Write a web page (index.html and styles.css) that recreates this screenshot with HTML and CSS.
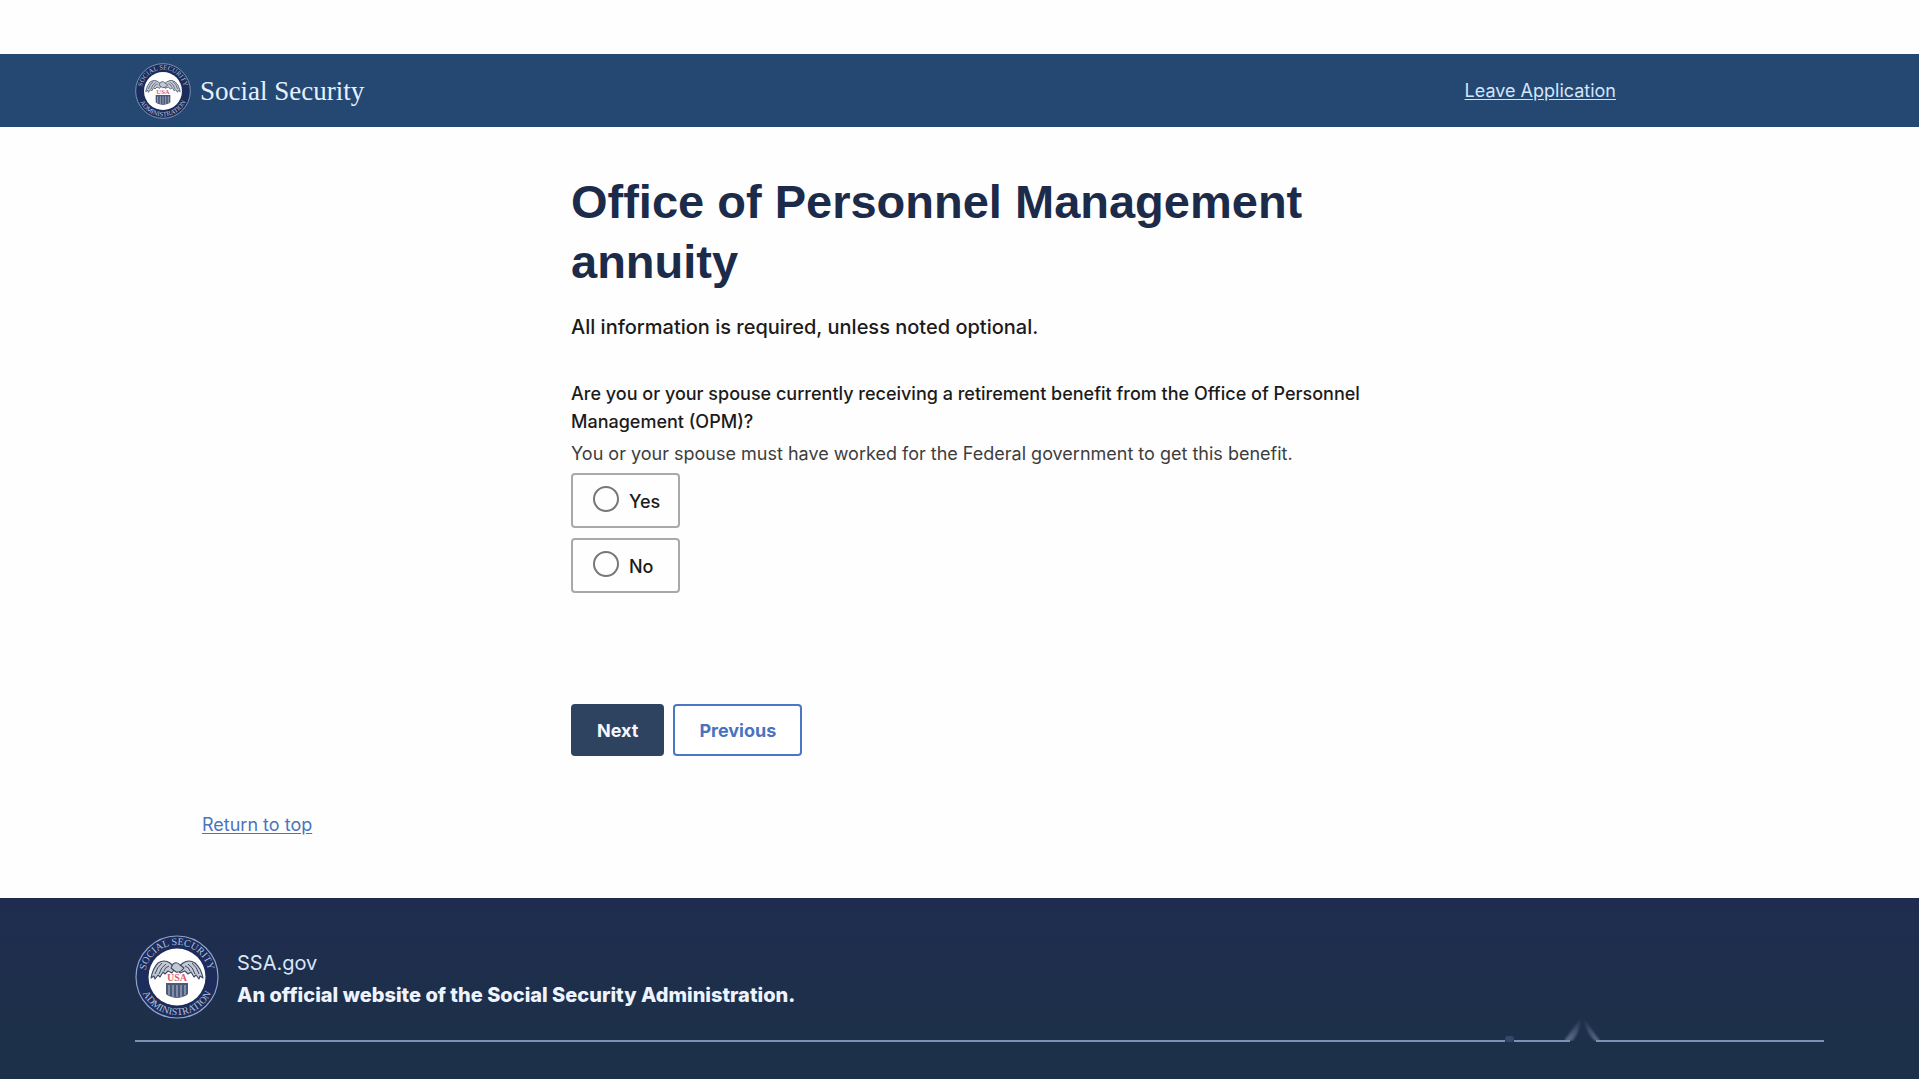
FILE: index.html
```html
<!DOCTYPE html>
<html lang="en">
<head>
  <meta charset="UTF-8">
  <meta name="viewport" content="width=device-width, initial-scale=1">
  <title>Office of Personnel Management annuity</title>
  <link rel="stylesheet" href="styles.css">
</head>
<body>

<!-- Seal, shared by the header and the footer -->
<svg class="defs" width="0" height="0" aria-hidden="true">
  <defs>
    <path id="arc-top" d="M 10 42 A 32 32 0 0 1 74 42" />
    <path id="arc-bottom" d="M 4 42 A 38 38 0 0 0 80 42" />
    <symbol id="seal" viewBox="0 0 84 84">
      <circle cx="42" cy="42" r="41" fill="#1c2c5b" stroke="#8fa3cc" stroke-width="1.200" />
      <circle cx="42" cy="42" r="28.500" fill="#fff" />
      <text class="seal-text"><textPath href="#arc-top" startOffset="50%" text-anchor="middle">SOCIAL SECURITY</textPath></text>
      <text class="seal-text"><textPath href="#arc-bottom" startOffset="50%" text-anchor="middle">ADMINISTRATION</textPath></text>
      <g fill="#c3c9d4" stroke="#3d4960" stroke-width="1.100" stroke-linejoin="round">
        <path d="M40 33 L35 28 Q29 24 23 28 Q18 33 16 43 L19 41 L20 44 L23 40 L25 42 L28 37 L30 39 L33 36 L37 38 Z" />
        <path d="M42 33 L48 28 Q54 24 60 28 Q66 33 68 43 L65 41 L64 44 L61 40 L59 42 L56 37 L53 39 L50 36 L45 38 Z" />
        <path d="M38 29 Q42 26 45 30 L49 33 Q45 38 41 37 L36 33 Z" />
      </g>
      <path d="M20 39 Q22 32 27 28 M24 39 Q26 32 31 29 M29 36 Q30 32 34 31 M64 39 Q62 32 57 28 M60 39 Q58 32 53 29 M55 36 Q54 32 50 31" fill="none" stroke="#3d4960" />
      <text class="seal-usa" x="42" y="46" text-anchor="middle">USA</text>
      <path d="M31 48 H53 V59 Q50 62 42 63 Q34 62 31 59 Z" fill="#4c5a7a" />
      <path d="M34 50 V60 M38 50 V62 M42 50 V62 M46 50 V62 M50 50 V60" stroke="#b9c2d2" />
    </symbol>
  </defs>
</svg>

<div class="page" id="top">
  <header class="header">
    <div class="brand">
      <svg class="brand-seal" role="img" aria-label="Social Security Administration"><use href="#seal" /></svg>
      <span class="brand-name">Social Security</span>
    </div>
    <a class="leave" href="#">Leave Application</a>
  </header>

  <main class="main">
    <h1>Office of Personnel Management annuity</h1>
    <p class="intro">All information is required, unless noted optional.</p>

    <form>
      <fieldset class="question">
        <legend>Are you or your spouse currently receiving a retirement benefit from the Office of Personnel Management (OPM)?</legend>
        <p class="hint">You or your spouse must have worked for the Federal government to get this benefit.</p>
        <label class="option" for="opm-yes">
          <input type="radio" id="opm-yes" name="opm" value="yes">
          <span>Yes</span>
        </label>
        <label class="option" for="opm-no">
          <input type="radio" id="opm-no" name="opm" value="no">
          <span>No</span>
        </label>
      </fieldset>

      <div class="actions">
        <button type="submit" class="btn btn-next">Next</button>
        <button type="button" class="btn btn-previous">Previous</button>
      </div>
    </form>
  </main>

  <div class="return">
    <a href="#top">Return to top</a>
  </div>

  <footer class="footer">
    <div class="footer-id">
      <svg class="footer-seal" role="img" aria-label="Social Security Administration"><use href="#seal" /></svg>
      <div class="footer-text">
        <p>SSA.gov</p>
        <p class="footer-strong">An official website of the Social Security Administration.</p>
      </div>
    </div>
    <!-- Divider with its two breaks -->
    <div class="divider" aria-hidden="true">
      <span class="rule rule-long"></span>
      <span class="dot"></span>
      <span class="rule rule-short"></span>
      <svg class="peak" viewBox="0 0 36 26">
        <defs>
          <linearGradient id="fade" x1="0" y1="1" x2="0" y2="0">
            <stop offset="0" stop-color="#8494b4" stop-opacity="0.600" />
            <stop offset="1" stop-color="#8494b4" stop-opacity="0" />
          </linearGradient>
          <filter id="soft"><feGaussianBlur stdDeviation="1.200" /></filter>
        </defs>
        <g fill="url(#fade)" filter="url(#soft)">
          <path d="M0 26 Q9 14 17 2 Q16 17 8 26 Z" />
          <path d="M36 26 Q27 14 19 2 Q22 17 31 26 Z" />
        </g>
      </svg>
      <span class="rule rule-end"></span>
    </div>
  </footer>
</div>

</body>
</html>
```
FILE: styles.css
```css
* {
  box-sizing: border-box;
}

body {
  margin: 0;
  font-family: Inter, Roboto, sans-serif;
  font-size: 18px;
  line-height: 28px;
  color: #1b1b1b;
  background-color: #fefefe;
}

h1, p {
  margin: 0;
}

.defs {
  position: absolute;
}

.seal-text {
  font-family: "Liberation Serif", serif;
  font-size: 10px;
  fill: #b4c2de;
}

.seal-usa {
  font-family: "Liberation Serif", serif;
  font-size: 10px;
  font-weight: bold;
  fill: #d9606c;
}

.page {
  display: flex;
  flex-direction: column;
  min-height: 100vh;
  padding-top: 54px;
}

/* header */
.header {
  display: flex;
  align-items: center;
  justify-content: space-between;
  height: 73px;
  padding: 0 303px 0 135px;
  background-color: #244872;
}

.brand {
  display: flex;
  align-items: center;
  gap: 9px;
}

.brand-seal {
  width: 56px;
  height: 56px;
}

.brand-name {
  font-family: Georgia, "Liberation Serif", serif;
  font-size: 27px;
  color: #e6f1ff;
}

.leave {
  color: #d5e5fb;
  text-underline-offset: 2px;
}

/* form */
.main {
  width: 100%;
  max-width: 1371px;
  padding: 45px 0 0 571px;
}

h1 {
  font-family: "Liberation Sans", Arial, sans-serif;
  font-size: 47px;
  line-height: 60px;
  color: #1c2b4a;
}

.intro {
  margin-top: 21px;
  font-size: 20px;
  font-weight: 500;
}

.question {
  margin: 39px 0 0;
  padding: 0;
  border: 0;
}

.question legend {
  padding: 0;
  font-weight: 500;
}

.hint {
  margin: 4px 0 5px;
  color: #3d3d3d;
}

.option {
  display: flex;
  align-items: center;
  gap: 10px;
  width: 109px;
  height: 55px;
  margin-bottom: 10px;
  padding: 2px 20px 0;
  border: 2px solid #a9a9ad;
  border-radius: 4px;
  font-weight: 500;
}

.option input {
  appearance: none;
  flex: none;
  width: 26px;
  height: 26px;
  margin: 0 0 6px;
  border: 2px solid #77777b;
  border-radius: 50%;
}

.option input:checked {
  background-color: #244872;
}

.actions {
  display: flex;
  gap: 9px;
  margin-top: 101px;
}

.btn {
  height: 52px;
  padding: 0 24px;
  border: 2px solid #2d4360;
  border-radius: 4px;
  font-family: inherit;
  font-size: 18px;
  font-weight: 700;
  cursor: pointer;
}

.btn-next {
  color: #f4f7fd;
  background-color: #2d4360;
}

.btn-previous {
  border-color: #4a76c4;
  color: #4a72bf;
  background-color: #fff;
}

.return {
  padding: 55px 0 59px 202px;
}

.return a {
  color: #4b74bd;
  text-underline-offset: 2px;
}

/* footer */
.footer {
  flex: 1;
  padding: 37px 95px 36px 135px;
  color: #d8e7f8;
  background: linear-gradient(#1f2c50, #1d3049 70%);
}

.footer-id {
  display: flex;
  align-items: center;
  gap: 18px;
}

.footer-seal {
  width: 84px;
  height: 84px;
}

.footer-text {
  padding-top: 3px;
  font-size: 20px;
  line-height: 32px;
}

.footer-strong {
  font-weight: 800;
  color: #eef4ff;
}

.divider {
  display: flex;
  align-items: flex-end;
  height: 26px;
  margin-top: -3px;
}

.rule {
  height: 2px;
  background-color: #7f90b2;
}

.rule-long {
  flex: 1370;
}

.rule-short {
  flex: 56;
}

.rule-end {
  flex: 228;
}

.dot {
  width: 9px;
  height: 6px;
  border-radius: 3px;
  background-color: #34486a;
}

.peak {
  width: 36px;
  height: 26px;
  margin: 0 -4px 1px -6px;
}
```
